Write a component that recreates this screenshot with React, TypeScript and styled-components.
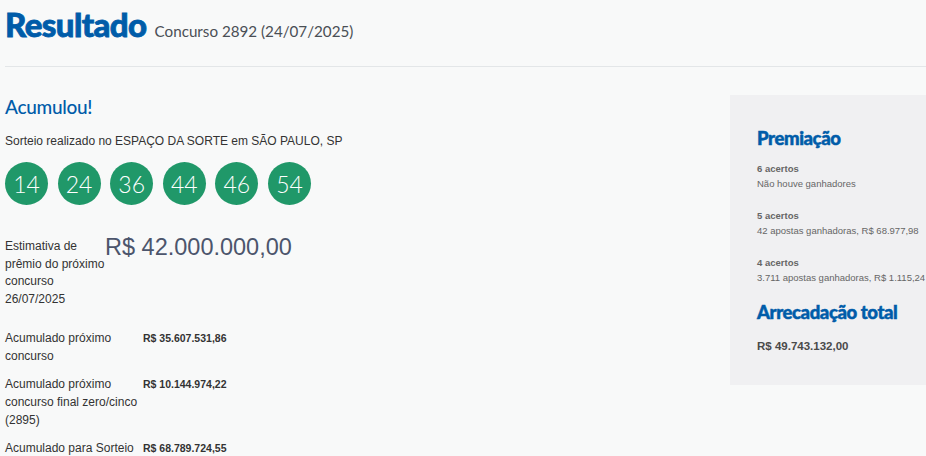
import React from "react";
import styled, { createGlobalStyle } from "styled-components";

const Global = createGlobalStyle`
  html, body { margin: 0; padding: 0; background: #f8f9f9; }
  body { font-family: "Liberation Sans", Arial, sans-serif; color: #333; }
`;

const Page = styled.div`
  width: 926px;
  height: 456px;
  overflow: hidden;
`;

const Header = styled.header`
  display: flex;
  align-items: baseline;
  gap: 8px;
  padding-top: 4px;
  height: 67px;
  box-sizing: border-box;
  border-bottom: 1px solid #e3e6e8;
  margin-left: 5px;
`;

const Title = styled.h1`
  margin: 0;
  font-family: Lato, sans-serif;
  font-weight: 900;
  font-size: 33px;
  letter-spacing: -0.6px;
  -webkit-text-stroke: 0.8px #005ca9;
  color: #005ca9;
  line-height: 40px;
`;

const Sub = styled.span`
  font-family: Lato, sans-serif;
  font-size: 15.2px;
  color: #4a4f55;
`;

const Body = styled.div`
  display: flex;
  justify-content: space-between;
  padding: 28px 0 0 5px;
`;

const Left = styled.div`
  display: flex;
  flex-direction: column;
`;

const Acumulou = styled.h2`
  margin: 0;
  font-family: Lato, sans-serif;
  font-weight: 500;
  font-size: 19px;
  letter-spacing: -0.3px;
  color: #005ca9;
  line-height: 24px;
`;

const Local = styled.p`
  margin: 15px 0 0;
  font-size: 12px;
  color: #333;
`;

const Balls = styled.ul`
  list-style: none;
  display: flex;
  gap: 9.6px;
  margin: 14px 0 0;
  padding: 0;
`;

const Ball = styled.li`
  width: 43px;
  height: 43px;
  border-radius: 50%;
  background: #209869;
  color: #fff;
  display: flex;
  align-items: center;
  justify-content: center;
  font-family: Lato, sans-serif;
  font-weight: 300;
  font-size: 23px;
`;

const Estimate = styled.div`
  display: flex;
  margin-top: 33px;
`;

const EstLabel = styled.div`
  width: 100px;
  font-size: 12px;
  line-height: 17.7px;
  color: #333;
`;

const EstValue = styled.div`
  font-size: 23.5px;
  color: #4c556c;
  line-height: 26px;
  margin-top: -4px;
`;

const Rows = styled.div`
  display: grid;
  grid-template-columns: 138px auto;
  row-gap: 10px;
  margin-top: 20px;
`;

const RowLabel = styled.div`
  font-size: 12px;
  line-height: 18px;
  color: #333;
`;

const RowValue = styled.div`
  font-size: 10.5px;
  font-weight: bold;
  line-height: 18px;
  color: #333;
`;

const Panel = styled.aside`
  width: 196px;
  height: 290px;
  box-sizing: border-box;
  background: #f0f0f2;
  padding: 31px 0 0 27px;
`;

const PanelTitle = styled.h3`
  margin: 0;
  font-family: Lato, sans-serif;
  font-weight: 900;
  font-size: 18.5px;
  letter-spacing: -0.4px;
  -webkit-text-stroke: 0.5px #005ca9;
  color: #005ca9;
  line-height: 24px;
`;

const Prize = styled.div<{ $first?: boolean }>`
  margin-top: ${(p) => (p.$first ? "12px" : "18px")};
  font-size: 9.5px;
  line-height: 14.5px;
  color: #666;
`;

const PrizeHead = styled.div`
  font-weight: bold;
  color: #666;
`;

const TotalTitle = styled(PanelTitle)`
  margin-top: 15px;
`;

const Total = styled.div`
  margin-top: 16px;
  font-size: 11.5px;
  font-weight: bold;
  color: #4a4a4a;
`;

const nums = ["14", "24", "36", "44", "46", "54"];

export default function App() {
  return (
    <Page>
      <Global />
      <Header>
        <Title>Resultado</Title>
        <Sub>Concurso 2892 (24/07/2025)</Sub>
      </Header>
      <Body>
        <Left>
          <Acumulou>Acumulou!</Acumulou>
          <Local>Sorteio realizado no ESPAÇO DA SORTE em SÃO PAULO, SP</Local>
          <Balls>
            {nums.map((n) => (
              <Ball key={n}>{n}</Ball>
            ))}
          </Balls>
          <Estimate>
            <EstLabel>
              Estimativa de prêmio do próximo concurso 26/07/2025
            </EstLabel>
            <EstValue>R$ 42.000.000,00</EstValue>
          </Estimate>
          <Rows>
            <RowLabel>Acumulado próximo concurso</RowLabel>
            <RowValue>R$ 35.607.531,86</RowValue>
            <RowLabel>
              Acumulado próximo concurso final zero/cinco (2895)
            </RowLabel>
            <RowValue>R$ 10.144.974,22</RowValue>
            <RowLabel>Acumulado para Sorteio</RowLabel>
            <RowValue>R$ 68.789.724,55</RowValue>
          </Rows>
        </Left>
        <Panel>
          <PanelTitle>Premiação</PanelTitle>
          <Prize $first>
            <PrizeHead>6 acertos</PrizeHead>
            Não houve ganhadores
          </Prize>
          <Prize>
            <PrizeHead>5 acertos</PrizeHead>
            42 apostas ganhadoras, R$ 68.977,98
          </Prize>
          <Prize>
            <PrizeHead>4 acertos</PrizeHead>
            3.711 apostas ganhadoras, R$ 1.115,24
          </Prize>
          <TotalTitle>Arrecadação total</TotalTitle>
          <Total>R$ 49.743.132,00</Total>
        </Panel>
      </Body>
    </Page>
  );
}
